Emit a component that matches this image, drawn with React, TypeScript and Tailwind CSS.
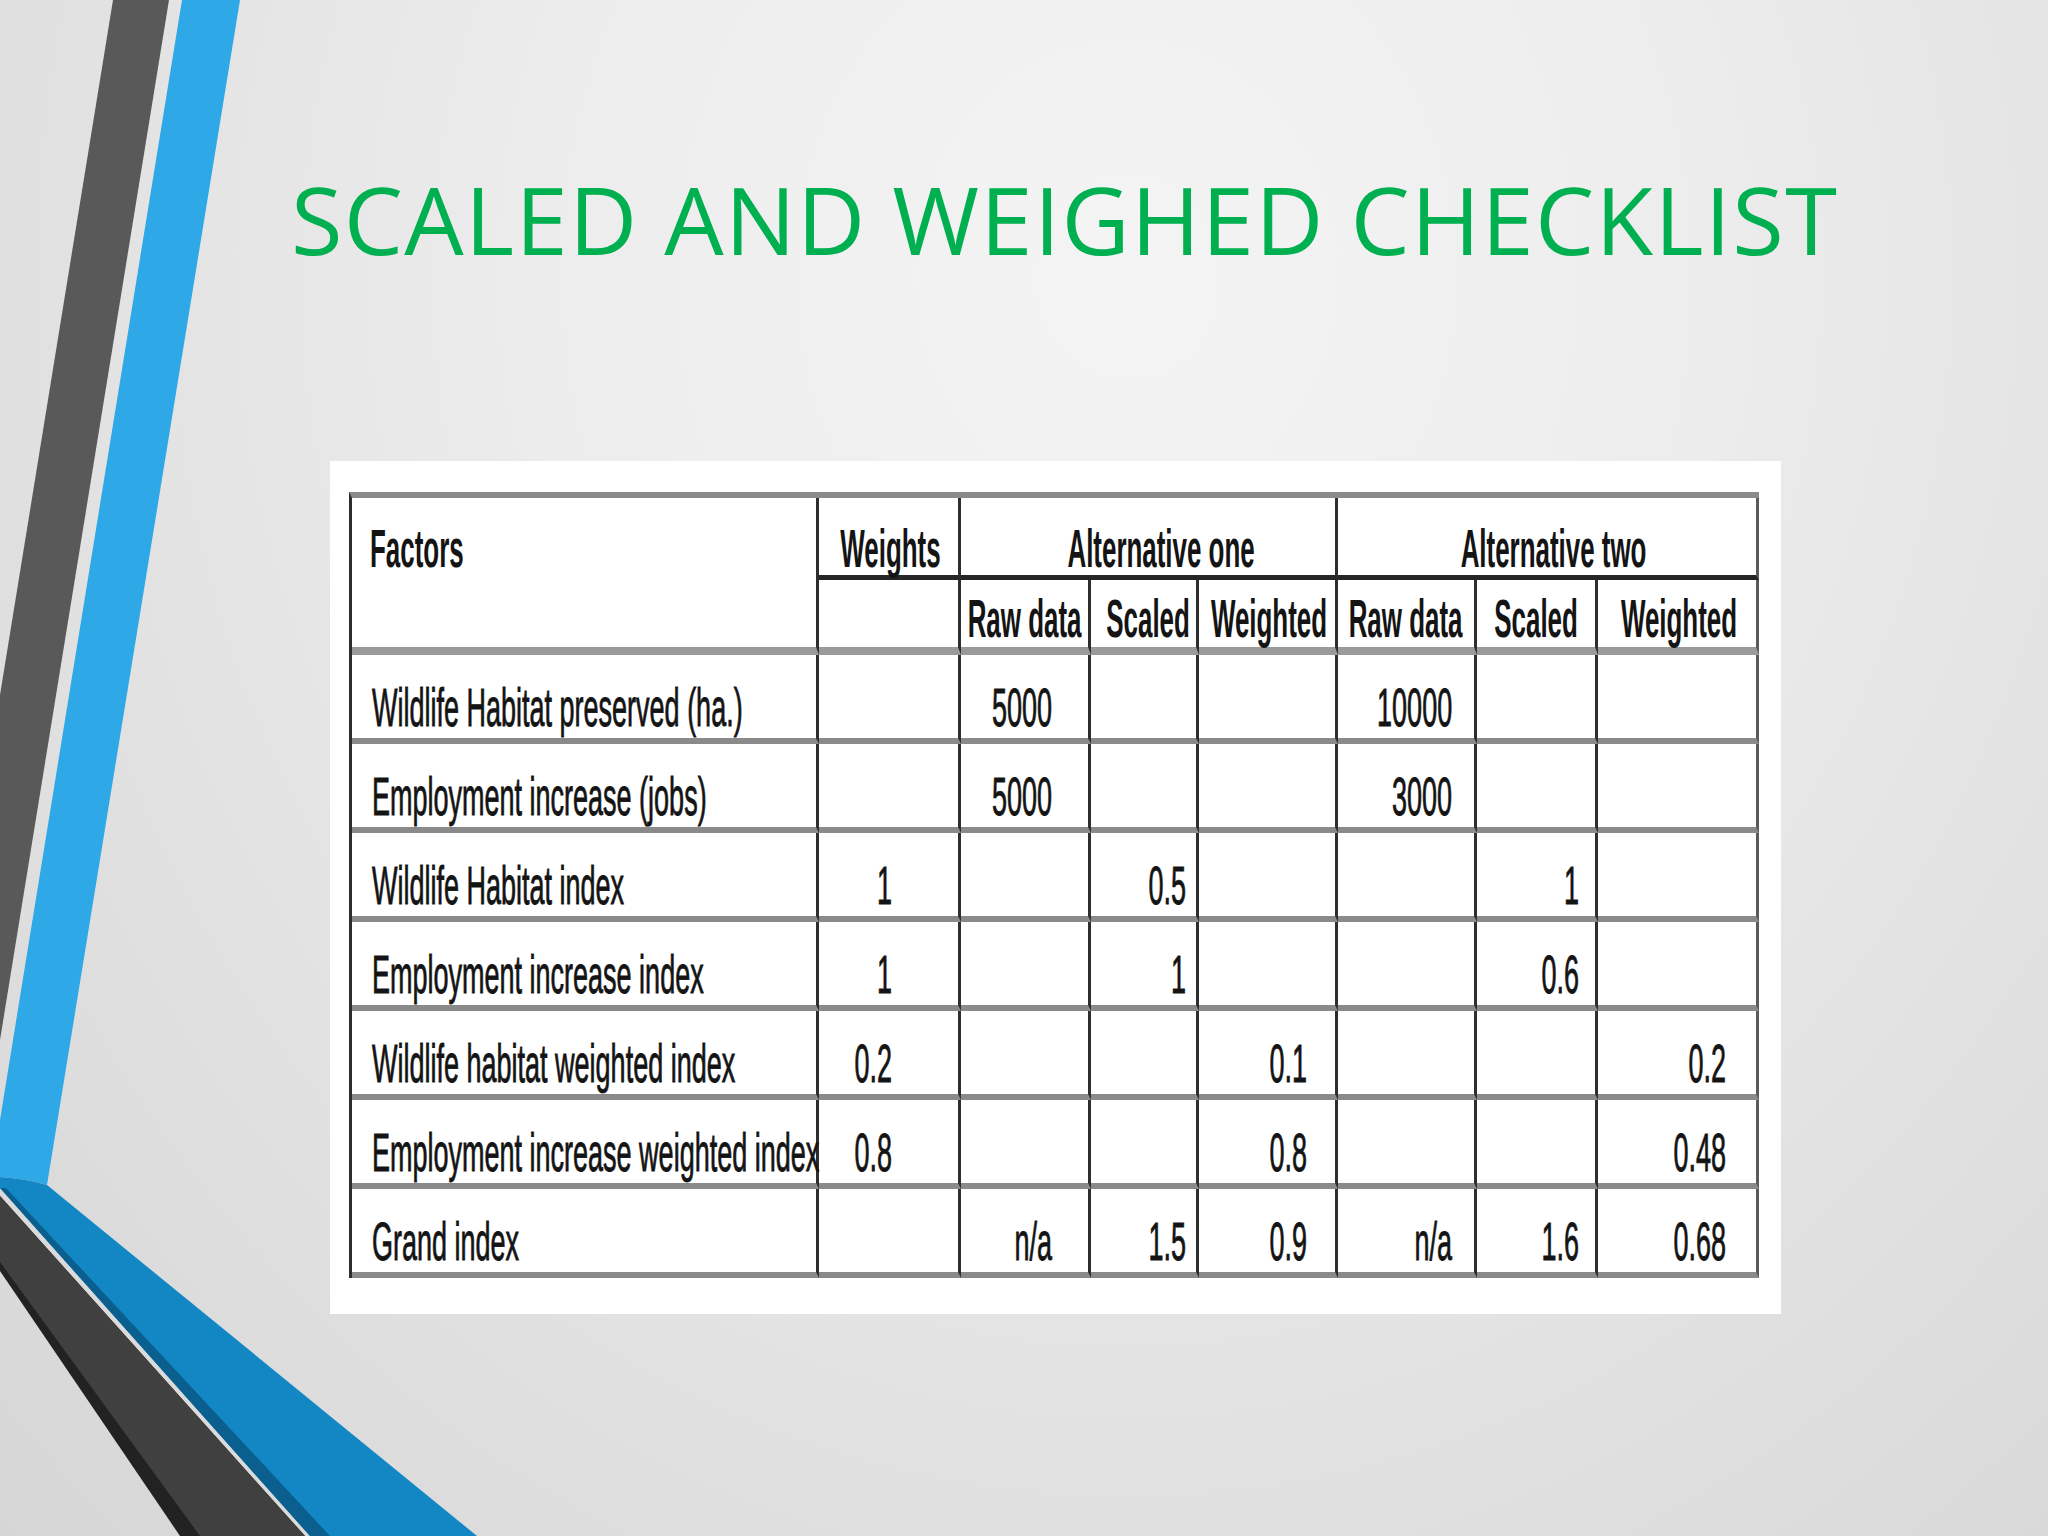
import React from "react";

type Align = "left" | "right" | "center";

function Txt({ children, bold = false, align }: { children: React.ReactNode; bold?: boolean; align: Align }) {
  const origin = align === "left" ? "origin-left" : align === "right" ? "origin-right" : "origin-center";
  return (
    <span
      className={`inline-block shrink-0 whitespace-nowrap leading-none ${
        bold ? "font-bold scale-x-[0.48]" : "font-normal scale-x-[0.5] [-webkit-text-stroke:0.9px_#141414]"
      } ${origin}`}
    >
      {children}
    </span>
  );
}

const colPad = ["pr-[66px]", "pr-[36px]", "pr-[10px]", "pr-[28px]", "pr-[22px]", "pr-[16px]", "pr-[30px]"];

const rows: string[][] = [
  ["Wildlife Habitat preserved (ha.)", "", "5000", "", "", "10000", "", ""],
  ["Employment increase (jobs)", "", "5000", "", "", "3000", "", ""],
  ["Wildlife Habitat index", "1", "", "0.5", "", "", "1", ""],
  ["Employment increase index", "1", "", "1", "", "", "0.6", ""],
  ["Wildlife habitat weighted index", "0.2", "", "", "0.1", "", "", "0.2"],
  ["Employment increase weighted index", "0.8", "", "", "0.8", "", "", "0.48"],
  ["Grand index", "", "n/a", "1.5", "0.9", "n/a", "1.6", "0.68"],
];

const subHeads = ["Raw data", "Scaled", "Weighted", "Raw data", "Scaled", "Weighted"];
const subPad = ["pl-[0px]", "pl-[10px]", "pl-[4px]", "pl-[0px]", "pl-[0px]", "pl-[4px]"];

function Stripes() {
  return (
    <svg className="absolute inset-0 pointer-events-none" width="2048" height="1536" viewBox="0 0 2048 1536">
      {/* upper dark stripe */}
      <polygon points="113,0 169,0 0,1040 0,695" fill="#595959" />
      {/* upper blue stripe */}
      <path d="M182,0 L240,0 L47,1185 Q22,1178 0,1177 L0,1120 Z" fill="#2ea8e6" />
      {/* lower dark stripe with shadow */}
      <polygon points="0,1196 305,1536 180,1536 0,1271" fill="#222222" />
      <polygon points="0,1196 305,1536 200,1536 0,1262" fill="#404040" />
      {/* lower blue stripe */}
      <path d="M0,1177 Q22,1178 47,1185 L477,1536 L310,1536 L0,1188 Z" fill="#1287c4" />
      <polygon points="0,1188 6,1188 330,1536 310,1536" fill="#0b5f8f" />
    </svg>
  );
}

export default function App() {
  return (
    <div
      className="relative w-[2048px] h-[1536px] overflow-hidden bg-[radial-gradient(ellipse_at_55%_18%,#f4f4f4_0%,#ededed_35%,#e2e2e2_65%,#d6d6d6_100%)]"
    >
      <Stripes />
      <div className="relative z-10 flex flex-col">
        <div className="pl-[291px] pt-[172px]">
          <h1 className="text-[94px] leading-none font-normal tracking-[1.3px] text-[#00b050] whitespace-nowrap [font-family:'Open_Sans',sans-serif]">
            SCALED AND WEIGHED CHECKLIST
          </h1>
        </div>

        <div className="ml-[330px] mt-[195px] w-[1451px] h-[853px] bg-white pl-[19px] pt-[31px]">
          <div className="grid grid-cols-[467px_142px_130px_108px_139px_139px_121px_161px] grid-rows-[82px_75px_repeat(7,89px)] w-[1410px] border-t-[6px] border-l-[3px] border-t-[#8a8a8a] border-l-[#2e2e2e] text-[54px] text-[#141414] [font-family:'Liberation_Sans',Arial,sans-serif]">
            {/* header row 1 */}
            <div className="row-span-2 flex items-start pl-[18px] pt-[23px] border-r-[3px] border-r-[#2e2e2e] border-b-[8px] border-b-[#9a9a9a]">
              <Txt bold align="left">Factors</Txt>
            </div>
            <div className="flex justify-center items-start pt-[23px] pl-[4px] border-r-[3px] border-r-[#2e2e2e] border-b-[5px] border-b-[#262626]">
              <Txt bold align="center">Weights</Txt>
            </div>
            <div className="col-span-3 flex justify-center items-start pt-[23px] pl-[26px] border-r-[3px] border-r-[#2e2e2e] border-b-[5px] border-b-[#262626]">
              <Txt bold align="center">Alternative one</Txt>
            </div>
            <div className="col-span-3 flex justify-center items-start pt-[23px] pl-[13px] border-r-[3px] border-r-[#5a5a5a] border-b-[5px] border-b-[#262626]">
              <Txt bold align="center">Alternative two</Txt>
            </div>

            {/* header row 2 */}
            <div className="border-r-[3px] border-r-[#2e2e2e] border-b-[8px] border-b-[#9a9a9a]" />
            {subHeads.map((h, i) => (
              <div
                key={i}
                className={`flex justify-center items-start pt-[11px] border-r-[3px] border-b-[8px] border-b-[#9a9a9a] ${subPad[i]} ${
                  i === 5 ? "border-r-[#5a5a5a]" : "border-r-[#2e2e2e]"
                }`}
              >
                <Txt bold align="center">{h}</Txt>
              </div>
            ))}

            {/* data rows */}
            {rows.map((r, ri) => (
              <React.Fragment key={ri}>
                <div className="flex items-start pl-[20px] pt-[25px] border-r-[3px] border-r-[#2e2e2e] border-b-[6px] border-b-[#8a8a8a]">
                  <Txt align="left">{r[0]}</Txt>
                </div>
                {r.slice(1).map((v, ci) => (
                  <div
                    key={ci}
                    className={`flex justify-end items-start pt-[25px] border-r-[3px] border-b-[6px] border-b-[#8a8a8a] ${colPad[ci]} ${
                      ci === 6 ? "border-r-[#5a5a5a]" : "border-r-[#2e2e2e]"
                    }`}
                  >
                    {v ? <Txt align="right">{v}</Txt> : null}
                  </div>
                ))}
              </React.Fragment>
            ))}
          </div>
        </div>
      </div>
    </div>
  );
}
